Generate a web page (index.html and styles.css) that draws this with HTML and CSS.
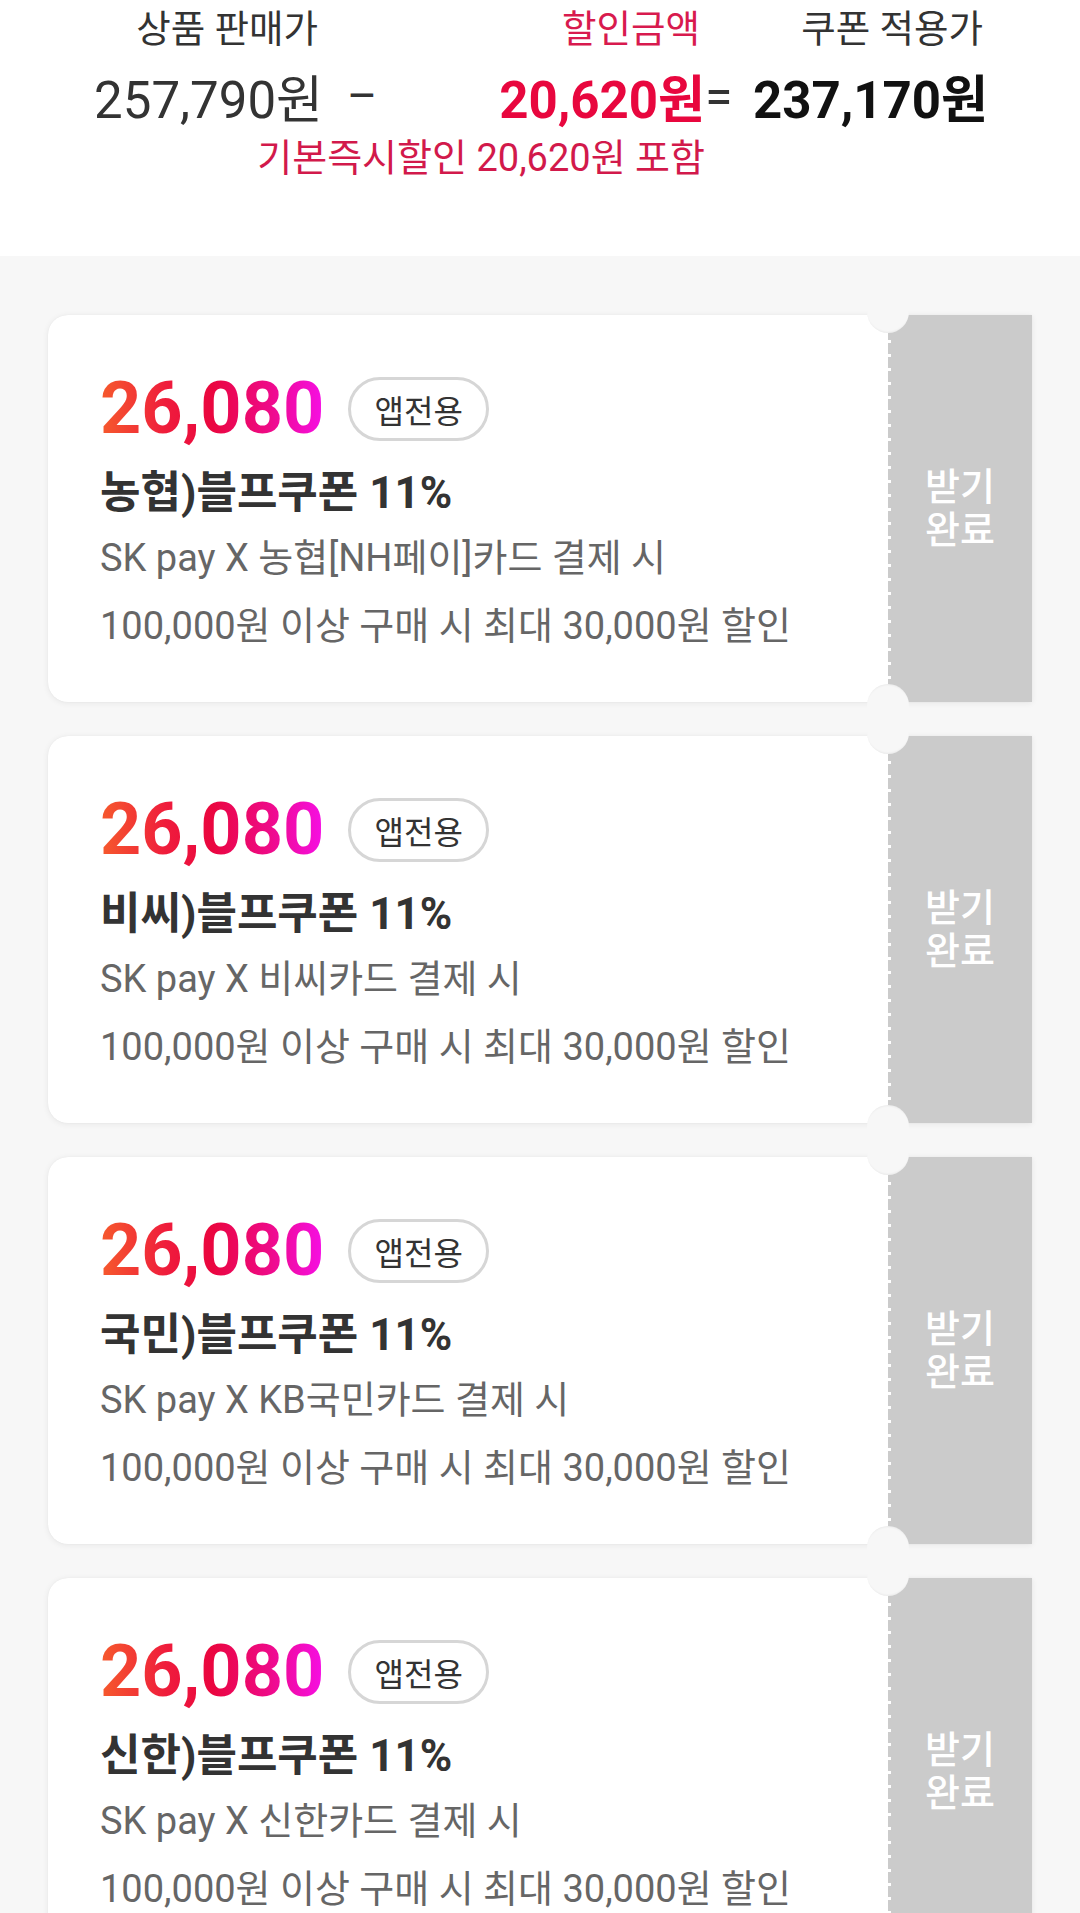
FILE: index.html
```html
<!DOCTYPE html>
<html lang="ko">
<head>
<meta charset="utf-8">
<title>쿠폰</title>
<link rel="stylesheet" href="styles.css">
</head>
<body>
<div class="page">
  <section class="summary">
    <div class="label">상품 판매가</div>
    <div class="label label-red">할인금액</div>
    <div class="label">쿠폰 적용가</div>

    <div class="value">257,790원</div>
    <div class="value value-op op-minus"><span class="minus">–</span><span class="value-red">20,620원</span></div>
    <div class="value value-op op-eq"><span class="eq">=</span><span class="value-bold">237,170원</span></div>

    <div class="note">기본즉시할인 20,620원 포함</div>
  </section>

  <section class="coupons">
    <article class="coupon">
      <div class="coupon-main">
        <div class="coupon-top">
          <span class="amount">26,080</span>
          <span class="badge">앱전용</span>
        </div>
        <div class="coupon-title">농협)블프쿠폰 11%</div>
        <div class="coupon-desc">SK pay X 농협[NH페이]카드 결제 시</div>
        <div class="coupon-cond">100,000원 이상 구매 시 최대 30,000원 할인</div>
      </div>
      <div class="coupon-stub">받기<br>완료</div>
    </article>

    <article class="coupon">
      <div class="coupon-main">
        <div class="coupon-top">
          <span class="amount">26,080</span>
          <span class="badge">앱전용</span>
        </div>
        <div class="coupon-title">비씨)블프쿠폰 11%</div>
        <div class="coupon-desc">SK pay X 비씨카드 결제 시</div>
        <div class="coupon-cond">100,000원 이상 구매 시 최대 30,000원 할인</div>
      </div>
      <div class="coupon-stub">받기<br>완료</div>
    </article>

    <article class="coupon">
      <div class="coupon-main">
        <div class="coupon-top">
          <span class="amount">26,080</span>
          <span class="badge">앱전용</span>
        </div>
        <div class="coupon-title">국민)블프쿠폰 11%</div>
        <div class="coupon-desc">SK pay X KB국민카드 결제 시</div>
        <div class="coupon-cond">100,000원 이상 구매 시 최대 30,000원 할인</div>
      </div>
      <div class="coupon-stub">받기<br>완료</div>
    </article>

    <article class="coupon">
      <div class="coupon-main">
        <div class="coupon-top">
          <span class="amount">26,080</span>
          <span class="badge">앱전용</span>
        </div>
        <div class="coupon-title">신한)블프쿠폰 11%</div>
        <div class="coupon-desc">SK pay X 신한카드 결제 시</div>
        <div class="coupon-cond">100,000원 이상 구매 시 최대 30,000원 할인</div>
      </div>
      <div class="coupon-stub">받기<br>완료</div>
    </article>
  </section>
</div>
</body>
</html>
```

FILE: styles.css
```css
* { box-sizing: border-box; }

html, body {
  margin: 0;
  padding: 0;
}

body {
  width: 1080px;
  height: 1913px;
  overflow: hidden;
  background: #f7f7f7;
  font-family: Roboto, "Noto Sans CJK KR", sans-serif;
  color: #333;
}

.page {
  width: 1080px;
}

/* ---------- summary header ---------- */
.summary {
  display: grid;
  grid-template-columns: 318px 382px 283px;
  align-content: start;
  height: 256px;
  padding-top: 9px;
  background: #fff;
}

.label {
  font-size: 37.5px;
  line-height: 40px;
  text-align: right;
  color: #333;
  white-space: nowrap;
}

.label-red {
  color: #d81a4e;
}

.value {
  margin-top: 22px;
  margin-right: -5px;
  font-size: 51px;
  line-height: 60px;
  text-align: right;
  color: #333;
  white-space: nowrap;
}

.value-op {
  display: flex;
  justify-content: space-between;
  align-items: center;
}

.op-minus {
  padding-left: 29px;
}

.op-eq {
  padding-left: 5px;
}

.minus {
  font-size: 46px;
  color: #333;
  line-height: 60px;
  position: relative;
  top: -5px;
}

.eq {
  font-size: 50px;
  color: #333;
  line-height: 60px;
  position: relative;
  top: -4px;
}

.value-red {
  font-weight: 700;
  color: #e8073e;
}

.value-bold {
  font-weight: 700;
  color: #111;
}

.note {
  grid-column: 1 / 3;
  margin-top: 7px;
  margin-right: -5px;
  font-size: 38px;
  line-height: 40px;
  text-align: right;
  color: #d2194b;
  white-space: nowrap;
}

/* ---------- coupons ---------- */
.coupons {
  display: flex;
  flex-direction: column;
  gap: 34px;
  padding: 59px 48px 0;
}

.coupon {
  position: relative;
  display: flex;
  width: 984px;
  border-radius: 20px 0 0 20px;
  background: #fff;
  box-shadow: 0 1px 6px rgba(0, 0, 0, 0.07), 0 0 1px rgba(0, 0, 0, 0.08);
}

.coupon::before,
.coupon::after {
  content: "";
  position: absolute;
  left: 819px;
  width: 42px;
  height: 42px;
  border-radius: 50%;
  background: #f7f7f7;
  z-index: 2;
}

.coupon::before {
  top: -24px;
  box-shadow: inset 0 -2px 2px -1px rgba(0, 0, 0, 0.05);
}

.coupon::after {
  bottom: -24px;
  box-shadow: inset 0 2px 2px -1px rgba(0, 0, 0, 0.05);
}

.coupon-main {
  flex: 0 0 840px;
  padding: 54px 0 51px 52px;
  border-radius: 20px 0 0 20px;
}

.coupon-top {
  display: flex;
  align-items: center;
  height: 80px;
}

.amount {
  font-size: 72px;
  font-weight: 700;
  line-height: 80px;
  background: linear-gradient(90deg, #f65a2c 0%, #ef1c3c 30%, #ea063f 50%, #ee0a86 75%, #f60fe6 100%);
  -webkit-background-clip: text;
  background-clip: text;
  -webkit-text-fill-color: transparent;
  color: transparent;
}

.badge {
  display: inline-flex;
  align-items: center;
  justify-content: center;
  margin-left: 24px;
  width: 141px;
  height: 64px;
  border: 3px solid #d6d6d6;
  border-radius: 32px;
  font-size: 32px;
  color: #333;
}

.coupon-title {
  margin-top: 19px;
  font-size: 44px;
  font-weight: 700;
  line-height: 50px;
  color: #333;
}

.coupon-desc {
  margin-top: 15px;
  font-size: 38px;
  line-height: 50px;
  color: #666;
}

.coupon-cond {
  margin-top: 18px;
  font-size: 38px;
  line-height: 50px;
  color: #666;
}

.coupon-stub {
  flex: 0 0 144px;
  display: flex;
  align-items: center;
  justify-content: center;
  text-align: center;
  font-size: 38px;
  font-weight: 500;
  line-height: 43px;
  color: #fff;
  background:
    repeating-linear-gradient(180deg, #cbcbcb 0 11px, #ffffff 11px 14px) left top / 3px 100% no-repeat,
    #cbcbcb;
}
```
